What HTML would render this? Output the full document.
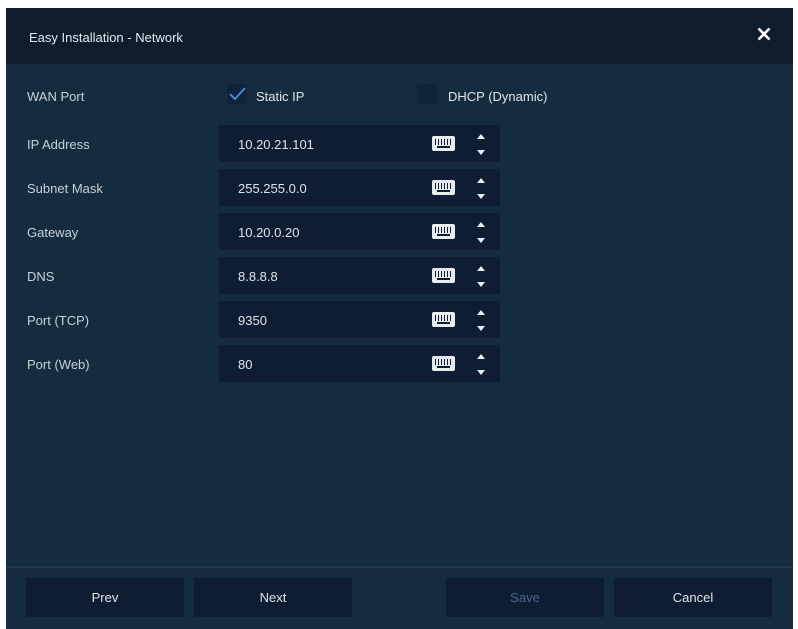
<!DOCTYPE html>
<html><head><style>
body{margin:0;width:798px;height:629px;background:#fff;position:relative;overflow:hidden;font-family:"Liberation Sans",sans-serif;font-size:13px;color:#d8dde3}
#p{position:absolute;left:6px;top:8px;width:787px;height:621px;background:#152c40}
#h{position:absolute;left:0;top:0;width:787px;height:56px;background:#0e1c2c}
#h span{position:absolute;left:23px;top:22px;font-size:13px;color:#e6e9ee}
.x{position:absolute;right:22px;top:19px}
.l{position:absolute;left:21px;font-size:13px;color:#c9d1da}
.f{position:absolute;left:213px;width:281px;height:37px;background:#0e1d33}
.f span{position:absolute;left:19px;top:12px;color:#e0e4ea}
.kb{position:absolute;left:213px;top:11px;width:23px;height:15px;background:#e8ecef;border-radius:2px}
.kb i{position:absolute;left:3px;top:3px;width:17px;height:6px;background:repeating-linear-gradient(90deg,#0e1d33 0 1px,#e8ecef 1px 3px)}
.kb b{position:absolute;left:5px;top:10px;width:13px;height:2px;background:#0e1d33}
.up{position:absolute;left:258px;top:9px;border:4px solid transparent;border-top:0;border-bottom:5px solid #e8ecef}
.dn{position:absolute;left:258px;top:25px;border:4px solid transparent;border-bottom:0;border-top:5px solid #e8ecef}
.cb{position:absolute;width:20px;height:20px;background:#10233a;top:76px}
#ft{position:absolute;left:0;top:558px;width:787px;height:2px;background:#1d3a50}
.bt{position:absolute;top:570px;width:158px;height:39px;background:#0e1d33;text-align:center;line-height:39px;color:#e0e4ea}
</style></head><body>
<div id="p">
<div id="h"><span>Easy Installation - Network</span>
<svg class="x" width="14" height="14" viewBox="0 0 14 14"><path d="M1.5 1.5L12.5 12.5M12.5 1.5L1.5 12.5" stroke="#fff" stroke-width="2.6"/></svg></div>
<div class="l" style="top:81px">WAN Port</div>
<div class="cb" style="left:221px"><svg width="20" height="20"><path d="M3 10L8 15L18 4" stroke="#4a8fe0" stroke-width="1.8" fill="none"/></svg></div>
<div style="position:absolute;left:250px;top:81px;color:#e0e4ea">Static IP</div>
<div class="cb" style="left:411px"></div>
<div style="position:absolute;left:442px;top:81px;color:#e0e4ea">DHCP (Dynamic)</div>

<div class="l" style="top:129px">IP Address</div>
<div class="f" style="top:117px"><span>10.20.21.101</span><div class="kb"><i></i><b></b></div><div class="up"></div><div class="dn"></div></div>
<div class="l" style="top:173px">Subnet Mask</div>
<div class="f" style="top:161px"><span>255.255.0.0</span><div class="kb"><i></i><b></b></div><div class="up"></div><div class="dn"></div></div>
<div class="l" style="top:217px">Gateway</div>
<div class="f" style="top:205px"><span>10.20.0.20</span><div class="kb"><i></i><b></b></div><div class="up"></div><div class="dn"></div></div>
<div class="l" style="top:261px">DNS</div>
<div class="f" style="top:249px"><span>8.8.8.8</span><div class="kb"><i></i><b></b></div><div class="up"></div><div class="dn"></div></div>
<div class="l" style="top:305px">Port (TCP)</div>
<div class="f" style="top:293px"><span>9350</span><div class="kb"><i></i><b></b></div><div class="up"></div><div class="dn"></div></div>
<div class="l" style="top:349px">Port (Web)</div>
<div class="f" style="top:337px"><span>80</span><div class="kb"><i></i><b></b></div><div class="up"></div><div class="dn"></div></div>

<div id="ft"></div>
<div class="bt" style="left:20px">Prev</div>
<div class="bt" style="left:188px">Next</div>
<div class="bt" style="left:440px;color:#4d6590">Save</div>
<div class="bt" style="left:608px">Cancel</div>
</div>
</body></html>
